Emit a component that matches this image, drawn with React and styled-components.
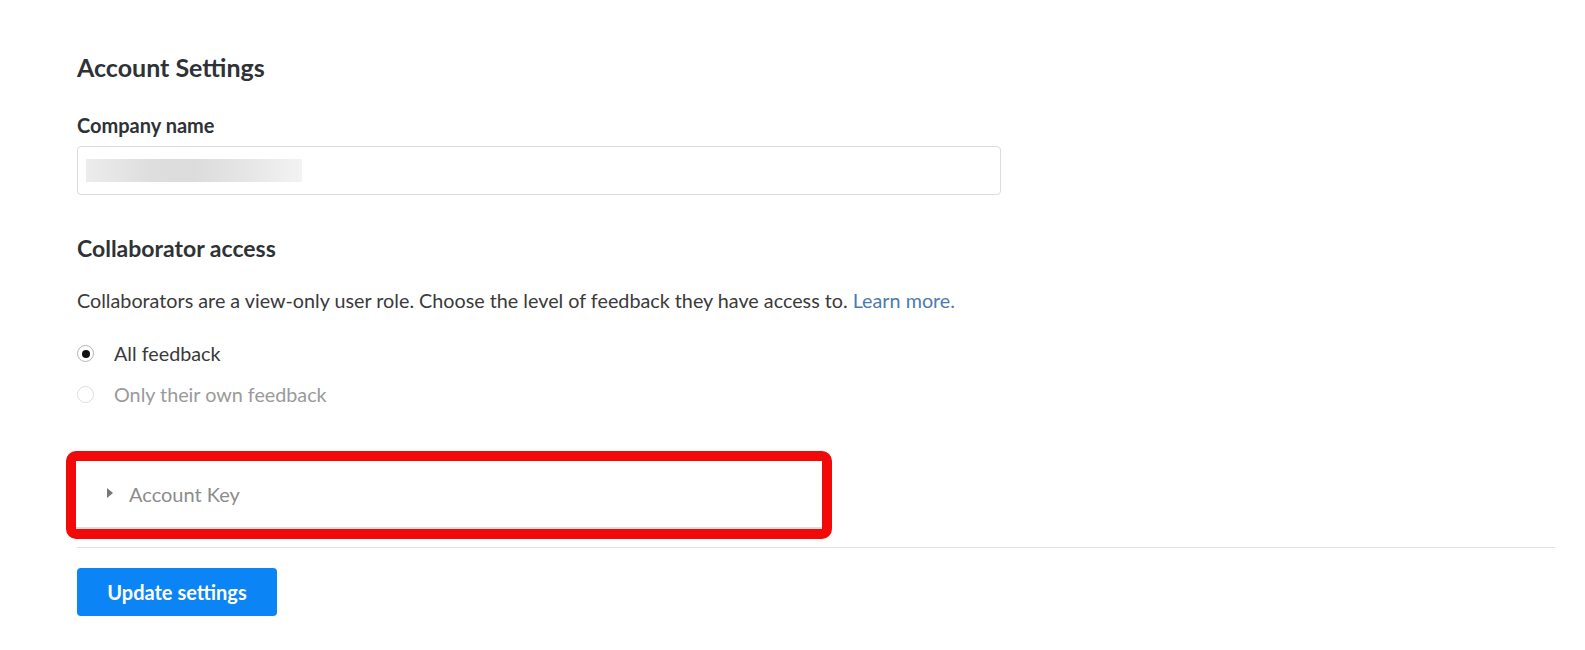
import React from 'react';
import styled, { createGlobalStyle } from 'styled-components';

const GlobalStyle = createGlobalStyle`
    body {
        margin: 0;
        background: #fff;
        font-family: Lato, "Open Sans", Arial, sans-serif;
        color: #333;
    }
`;

function App() {
    return (
        <Page>
            <GlobalStyle />
            <Title>Account Settings</Title>
            <Label>Company name</Label>
            <InputBox>
                <Redacted />
            </InputBox>
            <SubTitle>Collaborator access</SubTitle>
            <Description>
                Collaborators are a view-only user role. Choose the level of feedback they have access to.{' '}
                <a href="#learn">Learn more.</a>
            </Description>
            <RadioRow first>
                <Radio checked />
                <span>All feedback</span>
            </RadioRow>
            <RadioRow muted>
                <Radio />
                <span>Only their own feedback</span>
            </RadioRow>
            <Highlight>
                <KeyPanel>
                    <Caret />
                    <span>Account Key</span>
                </KeyPanel>
            </Highlight>
            <Divider />
            <Button>Update settings</Button>
        </Page>
    );
}

const Page = styled.div`
    display: flex;
    flex-direction: column;
    align-items: flex-start;
    padding: 52px 30px 40px 77px;
`;

const Title = styled.h1`
    margin: 0;
    font-size: 25px;
    line-height: 30px;
    font-weight: 700;
    color: #2e3236;
`;

const Label = styled.label`
    margin-top: 30px;
    font-size: 20px;
    line-height: 26px;
    font-weight: 700;
    color: #2e3236;
`;

const InputBox = styled.div`
    margin-top: 8px;
    width: 924px;
    height: 49px;
    box-sizing: border-box;
    border: 1px solid #dcdcdc;
    border-radius: 4px;
    display: flex;
    align-items: center;
    padding-left: 8px;
`;

const Redacted = styled.div`
    width: 216px;
    height: 23px;
    background: linear-gradient(90deg, #ececec 0%, #dedede 30%, #dcdcdc 50%, #e6e6e6 75%, #f3f3f3 100%);
`;

const SubTitle = styled.h2`
    margin: 39px 0 0;
    font-size: 23px;
    line-height: 28px;
    font-weight: 700;
    color: #2e3236;
`;

const Description = styled.p`
    margin: 26px 0 0;
    font-size: 19.75px;
    line-height: 26px;
    color: #3a3a3a;

    a {
        color: #4b7bb0;
        text-decoration: none;
    }
`;

const RadioRow = styled.div`
    margin-top: ${p => (p.first ? '27px' : '15px')};
    display: flex;
    align-items: center;
    gap: 20px;
    font-size: 19.75px;
    line-height: 26px;
    color: ${p => (p.muted ? '#9a9a9a' : '#3a3a3a')};
`;

const Radio = styled.span`
    width: 17px;
    height: 17px;
    box-sizing: border-box;
    border-radius: 50%;
    border: 1px solid ${p => (p.checked ? '#b5b5b5' : '#dedede')};
    display: flex;
    align-items: center;
    justify-content: center;
    margin-top: -1px;

    &::after {
        content: '';
        width: 8px;
        height: 8px;
        border-radius: 50%;
        background: ${p => (p.checked ? '#111' : 'transparent')};
    }
`;

const Highlight = styled.div`
    margin: 43px 0 0 -11px;
    border: 10px solid #f20a0a;
    border-radius: 10px;
`;

const KeyPanel = styled.div`
    width: 746px;
    height: 68px;
    box-sizing: border-box;
    background: #fff;
    border-bottom: 2px solid #dedede;
    display: flex;
    align-items: center;
    padding-left: 31px;
    gap: 16px;
    font-size: 20px;
    color: #8c8c8c;
`;

const Caret = styled.span`
    width: 0;
    height: 0;
    border-top: 5px solid transparent;
    border-bottom: 5px solid transparent;
    border-left: 6px solid #777;
    margin-top: -2px;
`;

const Divider = styled.hr`
    margin: 8px 0 0;
    align-self: stretch;
    width: 1478px;
    border: none;
    border-top: 1px solid #e3e3e3;
`;

const Button = styled.button`
    margin-top: 20px;
    width: 200px;
    height: 48px;
    border: none;
    border-radius: 4px;
    background: #0b84f5;
    color: #fff;
    font-family: Lato, Arial, sans-serif;
    font-size: 20px;
    font-weight: 700;
    cursor: pointer;
`;

export default App;
